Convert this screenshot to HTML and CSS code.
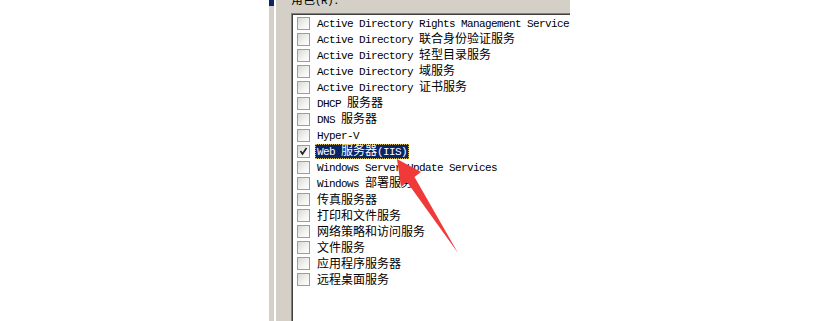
FILE: index.html
```html
<!DOCTYPE html>
<html lang="zh-CN">
<head>
<meta charset="utf-8">
<title>角色</title>
<link rel="stylesheet" href="styles.css">
</head>
<body>
<div class="page">
  <div class="strip"><div class="strip-top"></div></div>
  <div class="sep"></div>
  <div class="panel">
    <div class="label"><span class="zh">角色</span>(R):</div>
    <div class="list">
      <div class="row"><span class="cb"></span><span class="txt">Active Directory Rights Management Services</span></div>
      <div class="row"><span class="cb"></span><span class="txt">Active Directory <span class="zh">联合身份验证服务</span></span></div>
      <div class="row"><span class="cb"></span><span class="txt">Active Directory <span class="zh">轻型目录服务</span></span></div>
      <div class="row"><span class="cb"></span><span class="txt">Active Directory <span class="zh">域服务</span></span></div>
      <div class="row"><span class="cb"></span><span class="txt">Active Directory <span class="zh">证书服务</span></span></div>
      <div class="row"><span class="cb"></span><span class="txt">DHCP <span class="zh">服务器</span></span></div>
      <div class="row"><span class="cb"></span><span class="txt">DNS <span class="zh">服务器</span></span></div>
      <div class="row"><span class="cb"></span><span class="txt">Hyper-V</span></div>
      <div class="row"><span class="cb checked"><svg viewBox="0 0 11 11" width="11" height="11"><polyline points="2.5,5 4.5,8 8.5,2" fill="none" stroke="#222" stroke-width="1.6"/></svg></span><span class="txt sel">Web <span class="zh">服务器</span>(IIS)</span></div>
      <div class="row"><span class="cb"></span><span class="txt">Windows Server Update Services</span></div>
      <div class="row"><span class="cb"></span><span class="txt">Windows <span class="zh">部署服务</span></span></div>
      <div class="row"><span class="cb"></span><span class="txt cjk"><span class="zh">传真服务器</span></span></div>
      <div class="row"><span class="cb"></span><span class="txt cjk"><span class="zh">打印和文件服务</span></span></div>
      <div class="row"><span class="cb"></span><span class="txt cjk"><span class="zh">网络策略和访问服务</span></span></div>
      <div class="row"><span class="cb"></span><span class="txt cjk"><span class="zh">文件服务</span></span></div>
      <div class="row"><span class="cb"></span><span class="txt cjk"><span class="zh">应用程序服务器</span></span></div>
      <div class="row"><span class="cb"></span><span class="txt cjk"><span class="zh">远程桌面服务</span></span></div>
    </div>
  </div>
</div>
<svg class="arrow" width="840" height="321" viewBox="0 0 840 321">
  <polygon points="397,159 421,172 414.5,177 458,253 407,182 401,187" fill="#f03a3a"/>
</svg>
</body>
</html>
```
FILE: styles.css
```css
html, body {
  margin: 0;
  padding: 0;
  background: #ffffff;
}
body {
  position: relative;
  width: 840px;
  height: 321px;
  overflow: hidden;
}
.page {
  display: flex;
  height: 321px;
  padding-left: 269px;
  box-sizing: border-box;
}
.strip {
  width: 5px;
  background: #d4d0c8;
}
.strip-top {
  height: 6px;
  background: #0a246a;
}
.sep {
  width: 2px;
  background: #ffffff;
}
.panel {
  width: 294px;
  background: #d4d0c8;
  padding-left: 15px;
  box-sizing: border-box;
  display: flex;
  flex-direction: column;
  overflow: hidden;
}
.label {
  height: 12px;
  margin-top: -6px;
  line-height: 12px;
  font-family: "Liberation Mono", monospace;
  font-size: 11px;
  letter-spacing: -0.6px;
  color: #000;
  white-space: nowrap;
}
.zh {
  font-family: "Noto Sans CJK SC", sans-serif;
  font-size: 12px;
  line-height: 10px;
  letter-spacing: 0;
}
.list {
  flex: 1;
  margin-top: 7px;
  background: #ffffff;
  border-top: 1px solid #808080;
  border-left: 1px solid #808080;
  box-shadow: inset 1px 1px 0 #404040;
  padding: 1px 0 0 5px;
  overflow: hidden;
}
.row {
  height: 16px;
  display: flex;
  align-items: center;
  white-space: nowrap;
}
.cb {
  width: 11px;
  height: 11px;
  flex: none;
  border: 1px solid #9c9c9c;
  background: linear-gradient(135deg, #d8d8d2 0%, #f4f4f2 60%, #ffffff 100%);
  margin-right: 5px;
  display: flex;
}
.txt {
  display: block;
  box-sizing: border-box;
  font-family: "Liberation Mono", monospace;
  font-size: 11px;
  letter-spacing: -0.6px;
  color: #000;
  padding: 1px 2px 0;
  height: 15px;
  line-height: 14px;
  white-space: pre;
}
.txt.cjk {
  padding-top: 2px;
}
.txt.sel {
  background: #0a246a;
  color: #ffffff;
  outline: 1px dotted #d8c060;
  outline-offset: -1px;
}
.arrow {
  position: absolute;
  left: 0;
  top: 0;
  pointer-events: none;
}
```
